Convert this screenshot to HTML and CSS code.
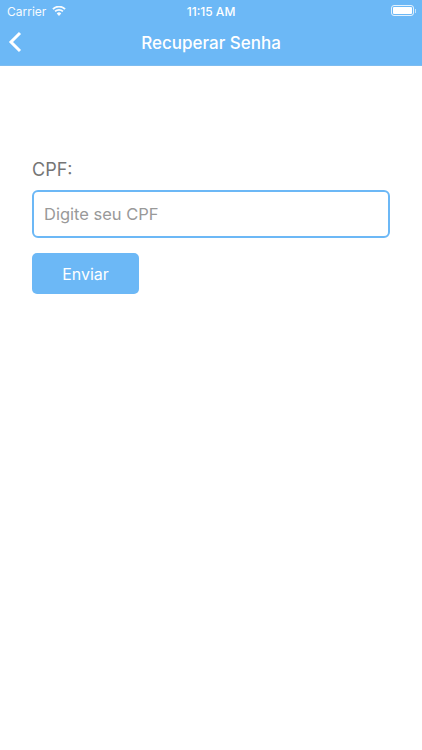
FILE: index.html
```html
<!DOCTYPE html>
<html lang="pt-BR">
<head>
    <meta charset="UTF-8">
    <meta name="viewport" content="width=device-width, initial-scale=1.0">
    <title>Recuperar Senha</title>
    <link rel="stylesheet" href="styles.css">
</head>
<body>
    <header class="top-bar">
        <div class="status-bar">
            <div class="status-left">
                <span>Carrier</span>
                <svg class="wifi" width="14" height="10" viewBox="0 0 15 11">
                    <path d="M7.5 11 L5 8.2 A3.6 3.6 0 0 1 10 8.2 Z" fill="#fff"/>
                    <path d="M3.2 6 A6.2 6.2 0 0 1 11.8 6" fill="none" stroke="#fff" stroke-width="2"/>
                    <path d="M0.8 3.4 A9.6 9.6 0 0 1 14.2 3.4" fill="none" stroke="#fff" stroke-width="2"/>
                </svg>
            </div>
            <span class="status-time">11:15 AM</span>
            <div class="battery">
                <div class="battery-body"><div class="battery-fill"></div></div>
                <div class="battery-tip"></div>
            </div>
        </div>
        <div class="nav-bar">
            <a class="back" href="#">
                <svg width="14" height="22" viewBox="0 0 14 22">
                    <path d="M12 2 L3 11 L12 20" fill="none" stroke="#fff" stroke-width="3"/>
                </svg>
            </a>
            <h1>Recuperar Senha</h1>
        </div>
    </header>

    <main class="content">
        <label for="cpf">CPF:</label>
        <input type="text" id="cpf" placeholder="Digite seu CPF">
        <button>Enviar</button>
    </main>
</body>
</html>
```

FILE: styles.css
```css
:root {
    --primary: #6cb8f6;
}

* {
    box-sizing: border-box;
    margin: 0;
    padding: 0;
    font-family: Inter, 'Liberation Sans', sans-serif;
}

body {
    background-color: white;
    min-height: 100vh;
}

.top-bar {
    background-color: var(--primary);
    color: white;
    height: 66px;
    border-bottom: 1px solid #7dbcf0;
}

.status-bar {
    height: 22px;
    padding: 0 6px 0 7px;
    display: flex;
    align-items: center;
    justify-content: space-between;
    position: relative;
    font-size: 12px;
}

.status-left {
    display: flex;
    align-items: center;
    gap: 6px;
    opacity: 0.95;
}

.wifi {
    margin-top: -1px;
}

.status-time {
    position: absolute;
    left: 0;
    right: 0;
    text-align: center;
    font-weight: 500;
}

.battery {
    display: flex;
    align-items: center;
    gap: 1px;
    margin-top: -1px;
}

.battery-body {
    width: 23px;
    height: 11px;
    border: 1px solid rgba(255, 255, 255, 0.8);
    border-radius: 3px;
    padding: 1px;
}

.battery-fill {
    height: 100%;
    background-color: white;
    border-radius: 1px;
}

.battery-tip {
    width: 1px;
    height: 4px;
    background-color: rgba(255, 255, 255, 0.6);
}

.nav-bar {
    height: 43px;
    padding-bottom: 1px;
    display: flex;
    align-items: center;
    justify-content: center;
    position: relative;
}

.nav-bar h1 {
    font-size: 17px;
    font-weight: 500;
}

.back {
    position: absolute;
    left: 8px;
    top: 9px;
    line-height: 0;
}

.content {
    padding: 93px 32px 0 32px;
    display: flex;
    flex-direction: column;
    align-items: flex-start;
}

label {
    font-size: 18px;
    line-height: 21px;
    color: #757575;
    margin-bottom: 10px;
}

input {
    width: 100%;
    height: 48px;
    padding: 0 10px;
    border: 2px solid var(--primary);
    border-radius: 6px;
    font-size: 16.5px;
    margin-bottom: 15px;
}

input::placeholder {
    color: #999;
}

button {
    width: 107px;
    height: 41px;
    background-color: var(--primary);
    color: white;
    border: none;
    border-radius: 5px;
    font-size: 16px;
}
```
